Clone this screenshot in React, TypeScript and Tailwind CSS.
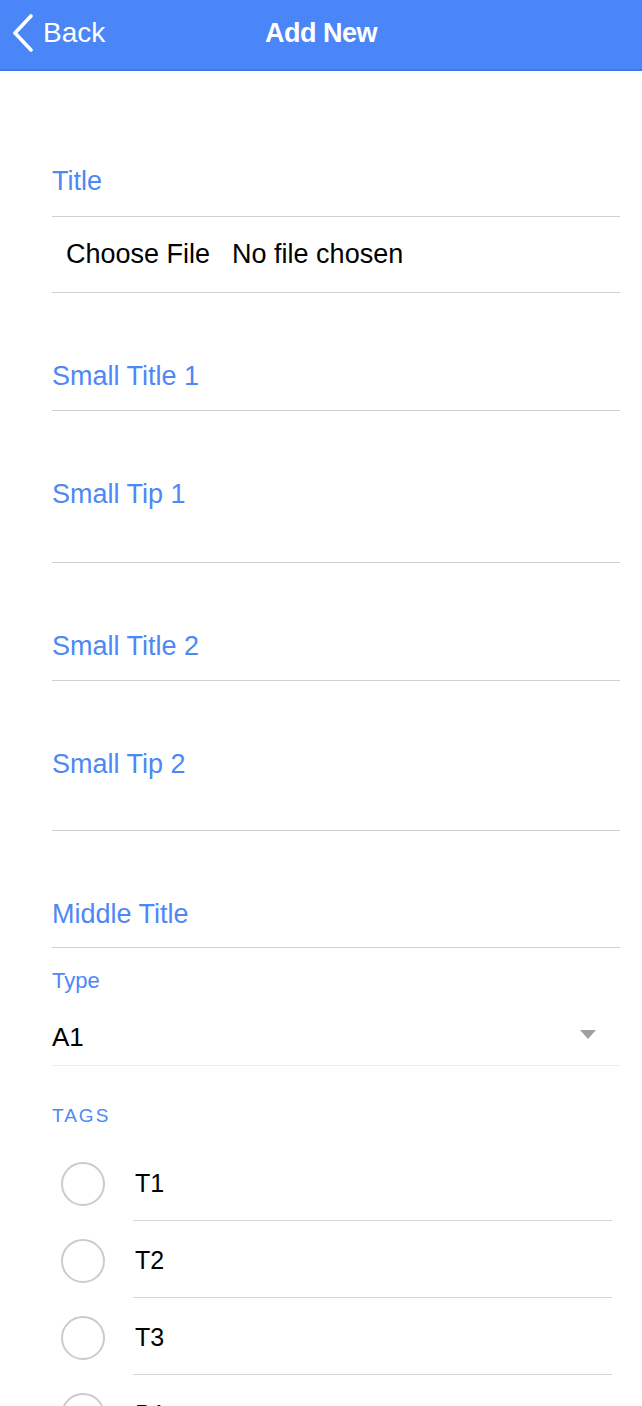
import { ReactNode } from "react";

const font = "font-['Liberation_Sans',Arial,sans-serif]";

function Field({ label, pb }: { label: string; pb: string }) {
  return (
    <div className={`border-b border-[#cfcfcf] pt-[68px] ${pb}`}>
      <div className="text-[27px] leading-[30px] text-[#4d88f5]">{label}</div>
    </div>
  );
}

function TagRow({ children }: { children: ReactNode }) {
  return (
    <div className="flex items-center">
      <div className="ml-[9px] mr-[28px] mt-[2px] h-[44px] w-[44px] shrink-0 rounded-full border-2 border-[#cbcbcb]" />
      <div className="flex h-[77px] flex-1 items-center border-b-[1.5px] border-[#d6d6d6] pl-[2px] pt-[4px] text-[25px] text-black">
        {children}
      </div>
    </div>
  );
}

export default function App() {
  return (
    <div className={`min-h-[1406px] w-full bg-white ${font}`}>
      {/* Header */}
      <header className="relative flex h-[71px] items-center border-b-[2px] border-[#3f7ae3] bg-[#4a86f7] pb-[3px] text-white">
        <div className="flex items-center pl-[12px]">
          <svg width="22" height="38" viewBox="0 0 22 38" className="mr-[9px]">
            <path
              d="M19 2 L3 19 L19 36"
              fill="none"
              stroke="white"
              strokeWidth="3.6"
              strokeLinecap="round"
              strokeLinejoin="round"
            />
          </svg>
          <span className="text-[28px] leading-none">Back</span>
        </div>
        <div className="absolute inset-x-0 text-center text-[27px] font-bold leading-none tracking-[-0.5px]">
          Add New
        </div>
      </header>

      {/* Form */}
      <div className="ml-[52px] mr-[22px]">
        <div className="border-b border-[#cfcfcf] pt-[95px] pb-[20px]">
          <div className="text-[27px] leading-[30px] text-[#4d88f5]">Title</div>
        </div>
        <div className="flex h-[76px] items-center border-b border-[#cfcfcf] pl-[14px] text-[27px] text-black">
          <span>Choose File</span>
          <span className="ml-[22px]">No file chosen</span>
        </div>

        <Field label="Small Title 1" pb="pb-[19px]" />
        <Field label="Small Tip 1" pb="pb-[53px]" />
        <Field label="Small Title 2" pb="pb-[19px]" />
        <Field label="Small Tip 2" pb="pb-[51px]" />
        <Field label="Middle Title" pb="pb-[18px]" />

        {/* Type select */}
        <div className="pt-[21px] text-[22px] leading-[24px] text-[#4d88f5]">Type</div>
        <div className="mt-[16px] flex h-[57px] items-center justify-between border-b border-[#ececec] pr-[24px]">
          <span className="text-[26px] text-black">A1</span>
          <svg width="16" height="9" viewBox="0 0 16 9" className="mb-[6px]">
            <path d="M0 0 H16 L8 9 Z" fill="#a0a0a0" />
          </svg>
        </div>

        {/* Tags */}
        <div className="mt-[39px] text-[19px] leading-[22px] tracking-[2px] text-[#4d88f5]">TAGS</div>
        <div className="mt-[17px] mr-[8px]">
          <TagRow>T1</TagRow>
          <TagRow>T2</TagRow>
          <TagRow>T3</TagRow>
          <TagRow>B1</TagRow>
        </div>
      </div>
    </div>
  );
}
